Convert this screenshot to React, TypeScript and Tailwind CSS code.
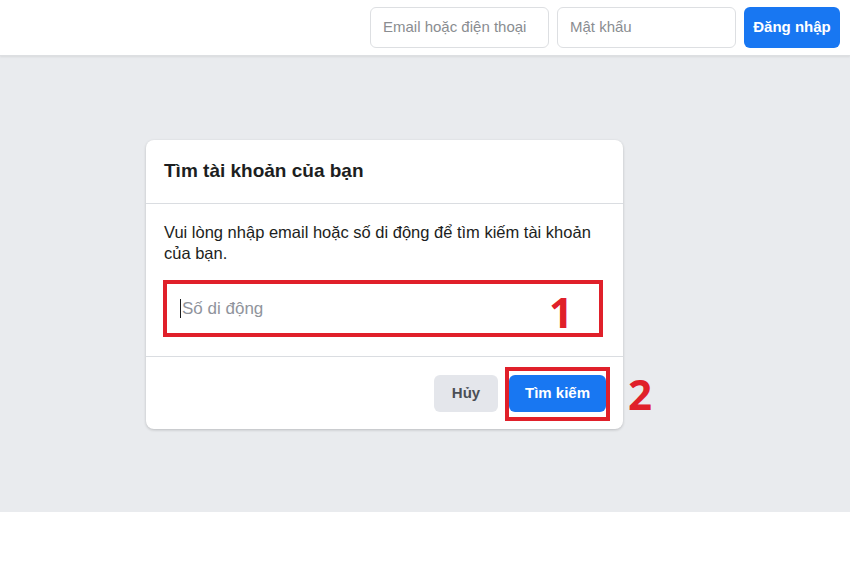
import React from "react";

export default function App() {
  const font = { fontFamily: '"Liberation Sans", Arial, sans-serif' };
  return (
    <div className="w-[850px] h-[569px] bg-white flex flex-col" style={font}>
      <header className="h-[56px] bg-white border-b border-[#dddfe2] shadow-[0_1px_2px_rgba(0,0,0,0.08)] flex items-start justify-end pt-[7px] pr-[10px] gap-[8px] relative z-10">
        <div className="w-[179px] h-[41px] border border-[#dddfe2] rounded-[6px] flex items-center px-[12px] text-[15px] text-[#8a8d91]">
          Email hoặc điện thoại
        </div>
        <div className="w-[179px] h-[41px] border border-[#dddfe2] rounded-[6px] flex items-center px-[12px] text-[15px] text-[#8a8d91]">
          Mật khẩu
        </div>
        <div className="w-[96px] h-[41px] bg-[#1877f2] rounded-[6px] flex items-center justify-center text-[15px] font-bold text-white">
          Đăng nhập
        </div>
      </header>
      <main className="h-[456px] bg-[#e9ebee] pt-[84px] pl-[146px]">
        <div className="w-[477px] bg-white rounded-[8px] shadow-[0_1px_3px_rgba(0,0,0,0.2)] relative">
          <div className="h-[63px] px-[18px] flex items-center text-[19px] font-bold text-[#1c1e21]">
            Tìm tài khoản của bạn
          </div>
          <div className="h-px bg-[#dadde1]" />
          <div className="pt-[18px] pb-[19px] px-[18px]">
            <p className="text-[16.5px] leading-[21px] text-[#1c1e21] w-[440px]">
              Vui lòng nhập email hoặc số di động để tìm kiếm tài khoản của bạn.
            </p>
            <div className="mt-[16px] ml-[-1px] w-[440px] h-[57px] border-4 border-[#e0202a] flex items-center pl-[13px] text-[17px] text-[#90949c] relative">
              <span className="w-px h-[19px] bg-[#1c1e21] mr-[1px]" />
              Số di động
              <span className="absolute right-[26px] top-[7px] text-[42px] leading-none font-bold text-[#e0202a]" style={{ fontFamily: '"Open Sans", sans-serif' }}>
                1
              </span>
            </div>
          </div>
          <div className="h-px bg-[#dadde1]" />
          <div className="h-[72px] flex items-center justify-end pr-[17px] gap-[11px]">
            <div className="w-[64px] h-[37px] bg-[#e4e6eb] rounded-[6px] flex items-center justify-center text-[15px] font-bold text-[#4b4f56]">
              Hủy
            </div>
            <div className="relative">
              <div className="w-[97px] h-[37px] bg-[#1877f2] rounded-[6px] flex items-center justify-center text-[15px] font-bold text-white">
                Tìm kiếm
              </div>
              <div className="absolute left-[-4px] right-[-4px] top-[-8px] bottom-[-9px] border-4 border-[#e0202a]" />
              <span className="absolute left-[119px] top-[-2px] text-[42px] leading-none font-bold text-[#e0202a]" style={{ fontFamily: '"Open Sans", sans-serif' }}>
                2
              </span>
            </div>
          </div>
        </div>
      </main>
      <div className="flex-1 bg-white" />
    </div>
  );
}
